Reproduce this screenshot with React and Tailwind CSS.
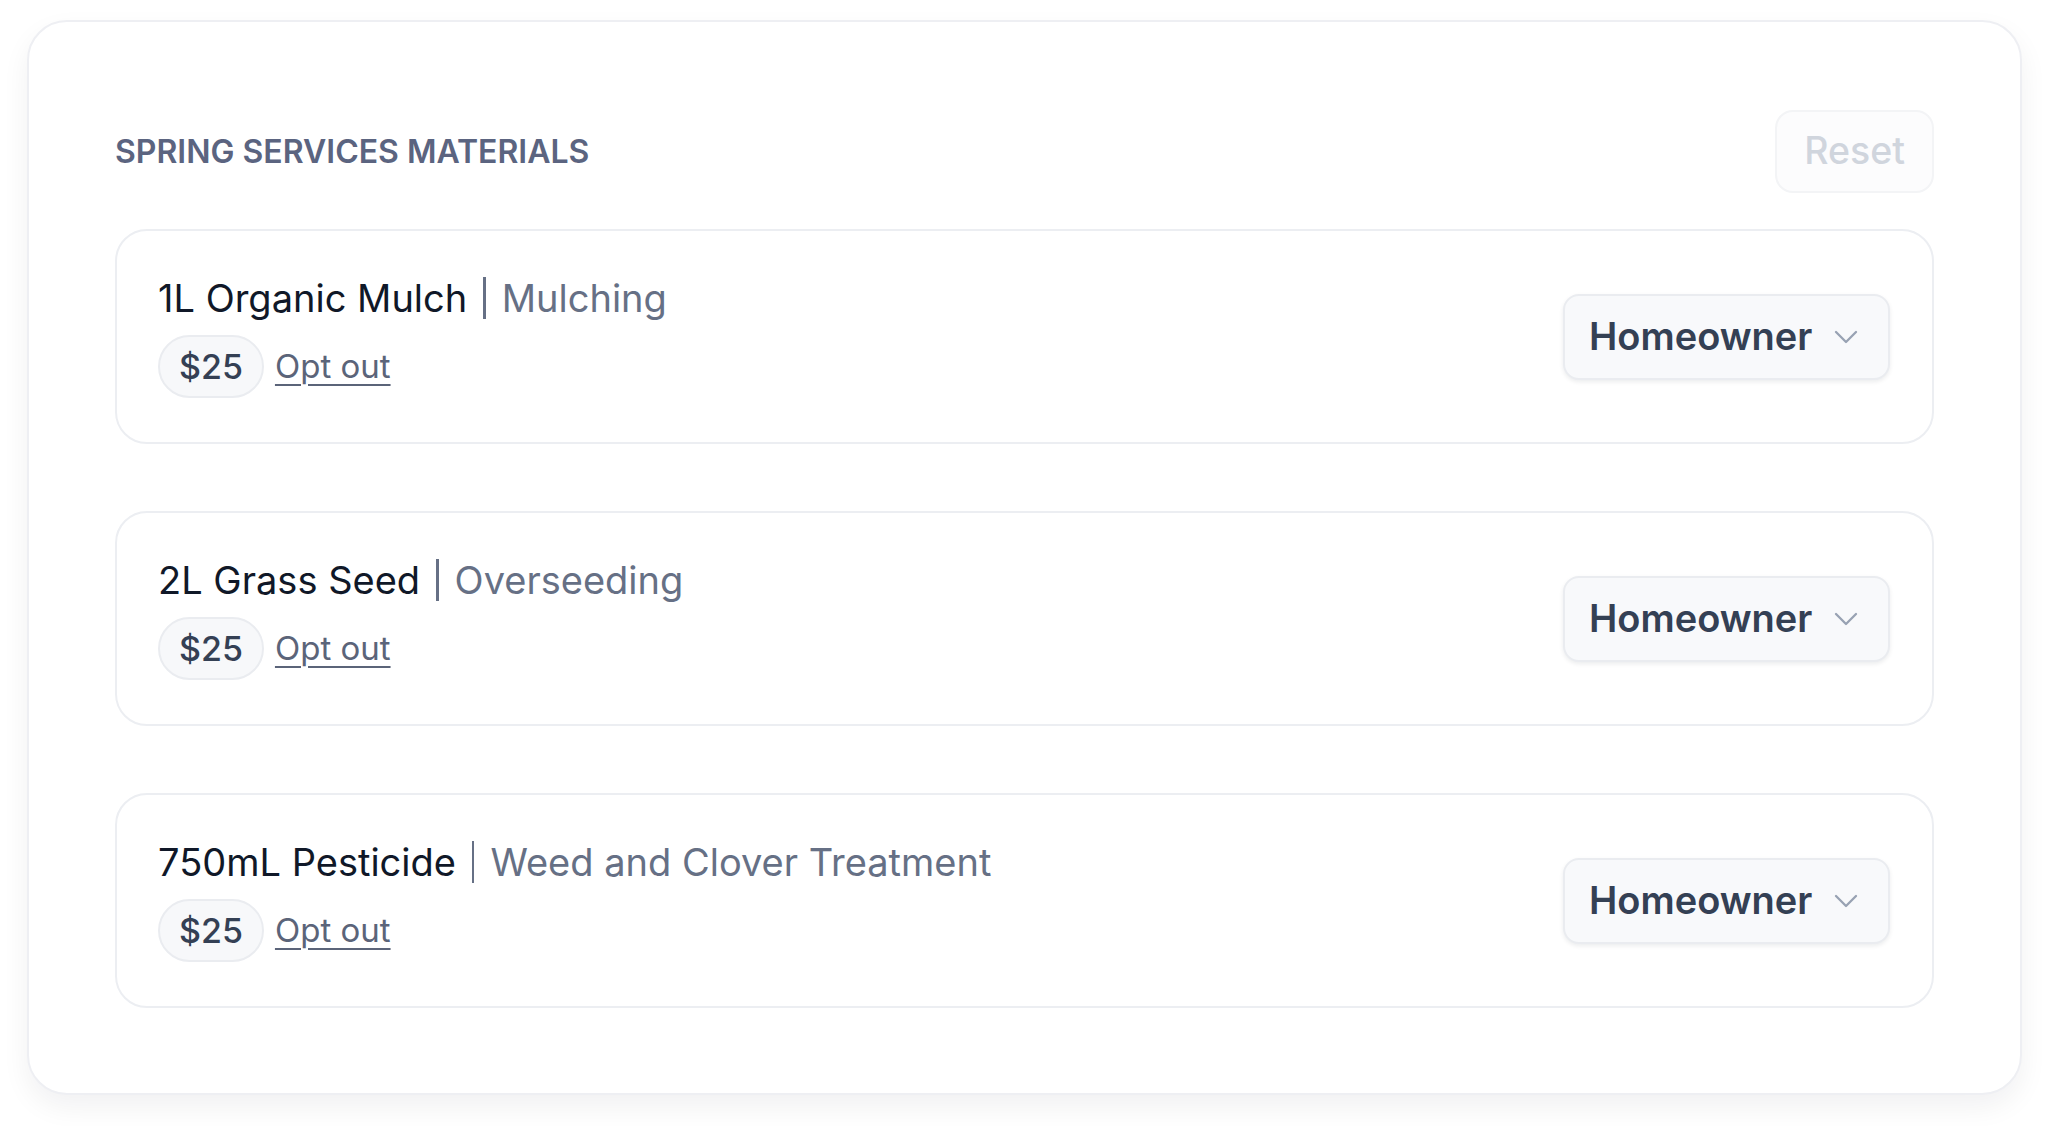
import React, { useState } from 'react';
import { ChevronDown } from 'lucide-react';

const materials = [
  { id: 1, name: '1L Organic Mulch', service: 'Mulching', price: 25 },
  { id: 2, name: '2L Grass Seed', service: 'Overseeding', price: 25 },
  { id: 3, name: '750mL Pesticide', service: 'Weed and Clover Treatment', price: 25 },
];

const MaterialRow = ({ item, payer }) => (
  <div className="flex items-center justify-between rounded-[32px] border-2 border-[#eceef2] bg-white pl-[41px] pr-[42px] py-[44px]">
    <div className="flex flex-col gap-[14px]">
      <div className="flex items-center text-[38px] leading-[46px]">
        <span className="text-[#101828]">{item.name}</span>
        <span className="mx-[16px] h-[42px] w-[2.5px] bg-[#667085]"></span>
        <span className="text-[#667085]">{item.service}</span>
      </div>
      <div className="flex items-center gap-[11px]">
        <span className="flex h-[63px] items-center rounded-full border-2 border-[#eaecf0] bg-[#f7f8fa] px-[19px] text-[34px] font-medium text-[#344054]">
          ${item.price}
        </span>
        <a href="#" className="text-[33px] text-[#5b6479] underline underline-offset-[6px] decoration-[2px]">
          Opt out
        </a>
      </div>
    </div>

    {/* Payer select */}
    <button className="flex h-[86px] w-[327px] items-center rounded-[16px] border-2 border-[#eaecf0] bg-[#f8f9fb] pl-[24px] pr-[22px] shadow-[0_2px_4px_rgba(16,24,40,0.08)]">
      <span className="text-[38px] font-semibold text-[#344054]">{payer}</span>
      <ChevronDown className="ml-auto h-[40px] w-[40px] text-[#98a2b3]" strokeWidth={1.4} />
    </button>
  </div>
);

const App = () => {
  const [payers] = useState({ 1: 'Homeowner', 2: 'Homeowner', 3: 'Homeowner' });

  return (
    <div className="min-h-screen bg-white pl-[27px] pr-[26px] pt-[20px] pb-[30px]" style={{ fontFamily: 'Inter, "Noto Sans", sans-serif' }}>
      <div className="rounded-[40px] border-2 border-[#eeeff3] bg-white px-[86px] pt-[88px] pb-[85px] shadow-[0_12px_28px_rgba(16,24,40,0.06)]">
        {/* Header */}
        <div className="flex items-center justify-between">
          <h2 className="text-[32px] font-semibold uppercase text-[#5b6480]">
            Spring Services Materials
          </h2>
          <button disabled className="h-[83px] rounded-[18px] border-2 border-[#f3f4f6] bg-[#fcfcfd] px-[27px] text-[37.5px] font-medium text-[#d0d5dd]">
            Reset
          </button>
        </div>

        {/* Materials */}
        <div className="mt-[36px] flex flex-col gap-[67px]">
          {materials.map((item) => (
            <MaterialRow key={item.id} item={item} payer={payers[item.id]} />
          ))}
        </div>
      </div>
    </div>
  );
};

export default App;
